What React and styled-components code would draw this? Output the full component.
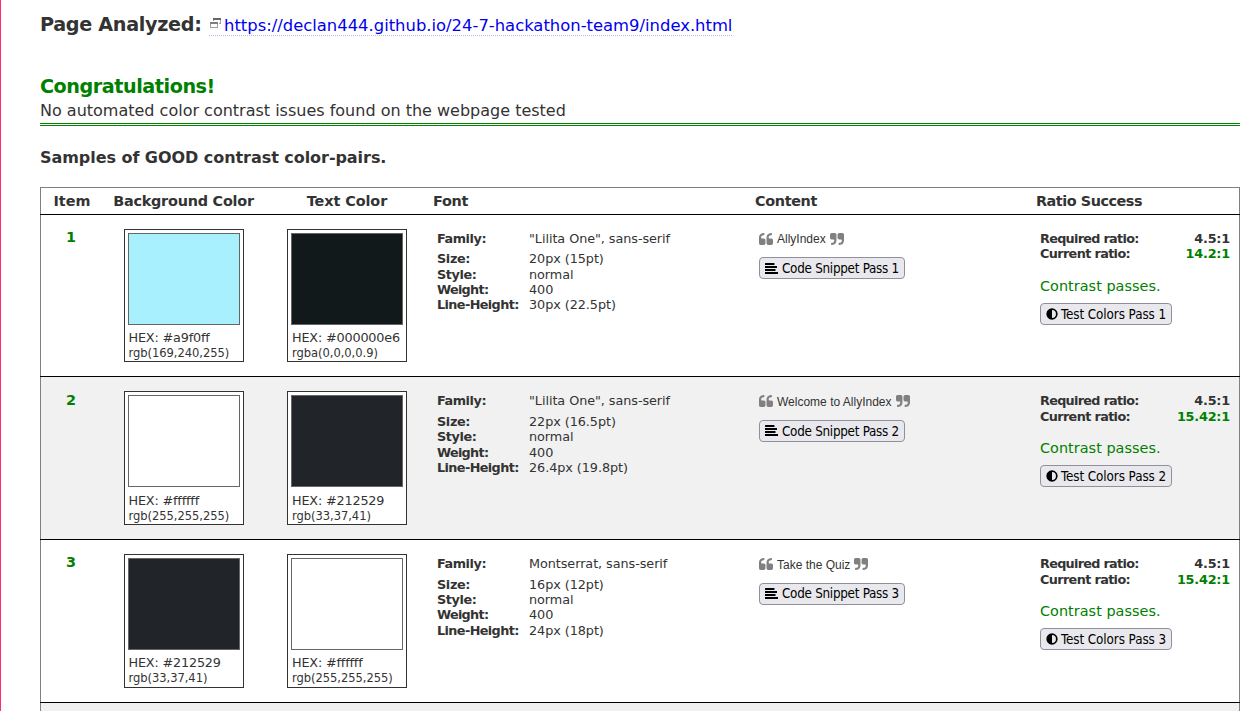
import React from 'react';
import styled, { createGlobalStyle } from 'styled-components';

const Global = createGlobalStyle`
  * { box-sizing: border-box; }
  html, body { margin: 0; background: #fff; overflow: hidden; }
  body { font-family: "DejaVu Sans", Verdana, sans-serif; color: #333; font-size: 16px; }
`;

const Page = styled.main`
  height: 711px;
  overflow: hidden;
  border-left: 1px solid #ff2b77;
  padding: 12px 15px 0 39px;
`;

const Track = styled.span`
  letter-spacing: ${(p) => p.$ls || 0}px;
`;

const Analyzed = styled.div`
  display: flex;
  align-items: flex-start;
  height: 24px;
  margin-bottom: 39px;
`;

const AnalyzedLabel = styled.h2`
  margin: 0;
  padding-top: 1px;
  width: 169px;
  font-size: 19.2px;
  line-height: 24px;
  letter-spacing: -0.32px;
`;

const PageLink = styled.a`
  display: flex;
  align-items: flex-start;
  gap: 3px;
  height: 20px;
  margin-top: 4px;
  color: #0000ee;
  font-size: 16.4px;
  line-height: 19px;
  text-decoration: none;
  border-bottom: 1px dotted #b9b9e6;
`;

const WindowIcon = styled.svg`
  display: block;
  width: 12px;
  height: 10px;
  margin-top: 2px;
`;

const Congrats = styled.h2`
  margin: 0;
  color: #008000;
  font-size: 19.2px;
  line-height: 24px;
  letter-spacing: -0.46px;
`;

const Summary = styled.p`
  margin: 0;
  height: 27px;
  padding-top: 2px;
  line-height: 20px;
  border-bottom: 3px double #008000;
`;

const SamplesTitle = styled.h3`
  margin: 22px 0 19px;
  font-size: 16px;
  line-height: 20px;
  letter-spacing: -0.05px;
`;

const Table = styled.section`
  border: 1px solid #808080;
  height: 620px;
`;

const Columns = styled.div`
  display: grid;
  grid-template-columns: 60px 165px 162px 322px 281px 1fr;
`;

const HeadRow = styled(Columns)`
  height: 25.7px;
  font-size: 14.4px;
  font-weight: bold;
  line-height: 26px;
`;

const HeadCell = styled.div`
  padding: 0 5px;
  text-align: ${(p) => (p.$center ? 'center' : 'left')};
  white-space: nowrap;
  letter-spacing: ${(p) => p.$ls || 0}px;
`;

const ItemHeadCell = styled(HeadCell)`
  padding: 0 4px 0 6px;
`;

const Divider = styled.div`
  height: 1px;
  margin: 0 -1px;
  background: #000;
`;

const Row = styled(Columns)`
  height: 161.67px;
  padding-top: 14px;
  background: ${(p) => (p.$shaded ? '#f1f1f1' : '#fff')};
`;

const ItemNumber = styled.div`
  padding-top: 0.35px;
  color: #008000;
  font-size: 14.4px;
  font-weight: bold;
  line-height: 17.3px;
  text-align: center;
`;

const SwatchBox = styled.div`
  justify-self: center;
  width: 120px;
  height: 133.7px;
  padding: 3px;
  border: 1px solid #333;
  background: #fff;
`;

const Swatch = styled.div`
  height: 92px;
  border: 1px solid #666;
  background: ${(p) => p.$color};
`;

const Hex = styled.div`
  padding: 5.2px 0 0 1px;
  font-size: 12.8px;
  line-height: 15.36px;
  white-space: nowrap;
  letter-spacing: -0.18px;
`;

const Rgb = styled.div`
  padding: 0.7px 0 0 1px;
  font-size: 11.52px;
  line-height: 15.4px;
  white-space: nowrap;
  letter-spacing: -0.04px;
`;

const FontList = styled.dl`
  display: grid;
  grid-template-columns: 92px 1fr;
  grid-template-rows: 20.36px;
  grid-auto-rows: 15.36px;
  margin: 0;
  padding: 2.15px 0 0 9px;
  font-size: 12.8px;
  line-height: 15.36px;
`;

const Term = styled.dt`
  font-weight: bold;
  letter-spacing: ${(p) => p.$ls}px;
`;

const Value = styled.dd`
  margin: 0;
  letter-spacing: -0.06px;
`;

const ContentCell = styled.div`
  padding: 2px 0 0 9px;
`;

const Quote = styled.div`
  display: flex;
  align-items: center;
  gap: 4px;
  height: 16px;
  margin-bottom: 10.6px;
  font: 12px/16px "Liberation Sans", Arial, sans-serif;
`;

const QuoteText = styled.span`
  padding-top: 1px;
`;

const QuoteMark = styled.svg`
  display: block;
  flex: none;
  width: 14px;
  height: 12px;
  fill: #808080;
`;

const Button = styled.button`
  display: flex;
  align-items: center;
  justify-content: flex-start;
  gap: ${(p) => p.$gap}px;
  width: ${(p) => p.$width}px;
  height: 22px;
  margin: 0;
  padding: 0 5px;
  border: 1px solid #8f8f9d;
  border-radius: 4px;
  background: #e9e9ed;
  color: #000;
  font: 13.33px/20px "DejaVu Sans Condensed", "DejaVu Sans", Tahoma, sans-serif;
  letter-spacing: ${(p) => p.$ls}px;
  white-space: nowrap;
  svg { flex: none; display: block; }
`;

const ButtonLabel = styled.span`
  padding-top: 1.6px;
`;

const TestButton = styled(Button)`
  padding-left: 4.5px;
`;

const RatioCell = styled.div`
  padding: 2.15px 9px 0 9px;
`;

const RatioLine = styled.div`
  display: flex;
  justify-content: space-between;
  font-size: 12.8px;
  font-weight: bold;
  line-height: 15.36px;
  color: #333;
`;

const RatioValue = styled.span`
  letter-spacing: -0.2px;
  color: ${(p) => (p.$good ? '#008000' : 'inherit')};
`;

const Passes = styled.p`
  margin: 15.1px 0 8.2px;
  color: #008000;
  font-size: 14.4px;
  line-height: 18px;
  letter-spacing: 0.04px;
`;

const AlignIcon = () => (
  <svg width="13" height="11" viewBox="0 0 13 11">
    <path d="M.5 0h8.5q.5 0 .5.5v1q0 .5-.5.5H.5Q0 2 0 1.500v-1Q0 0 .5 0zM0 3h12v2H0zM0 6h10.500v2H0zM0 9h13v2H0z" />
  </svg>
);

const ContrastIcon = () => (
  <svg width="12" height="12" viewBox="0 0 12 12">
    <circle cx="6" cy="6" r="4.8" fill="none" stroke="#000" strokeWidth="1.7" />
    <path d="M6 1a5 5 0 0 0 0 10z" />
  </svg>
);

const OPEN_MARK = 'M768 960v384q0 80-56 136t-136 56h-384q-80 0-136-56t-56-136v-704q0-104 40.5-198.5t109.5-163.5 163.5-109.5 198.5-40.5h64q26 0 45 19t19 45v128q0 26-19 45t-45 19h-64q-106 0-181 75t-75 181v32q0 40 28 68t68 28h224q80 0 136 56t56 136z';
const CLOSE_MARK = 'M768 320v704q0 104-40.5 198.5t-109.5 163.5-163.5 109.5-198.5 40.5h-64q-26 0-45-19t-19-45v-128q0-26 19-45t45-19h64q106 0 181-75t75-181v-32q0-40-28-68t-68-28h-224q-80 0-136-56t-56-136v-384q0-80 56-136t136-56h384q80 0 136 56t56 136z';

const Mark = ({ path }) => (
  <QuoteMark viewBox="0 128 1664 1408">
    <path d={path} />
    <path d={path} transform="translate(896 0)" />
  </QuoteMark>
);

const rows = [
  {
    bg: ['#a9f0ff', '#a9f0ff', 'rgb(169,240,255)'],
    fg: ['#11191a', '#000000e6', 'rgba(0,0,0,0.9)'],
    family: '"Lilita One", sans-serif', size: '20px (15pt)', lineHeight: '30px (22.5pt)',
    text: 'AllyIndex', ratio: '14.2:1',
  },
  {
    bg: ['#ffffff', '#ffffff', 'rgb(255,255,255)'],
    fg: ['#212529', '#212529', 'rgb(33,37,41)'],
    family: '"Lilita One", sans-serif', size: '22px (16.5pt)', lineHeight: '26.4px (19.8pt)',
    text: 'Welcome to AllyIndex', ratio: '15.42:1',
  },
  {
    bg: ['#212529', '#212529', 'rgb(33,37,41)'],
    fg: ['#ffffff', '#ffffff', 'rgb(255,255,255)'],
    family: 'Montserrat, sans-serif', size: '16px (12pt)', lineHeight: '24px (18pt)',
    text: 'Take the Quiz', ratio: '15.42:1',
  },
];

const ColorSample = ({ sample: [color, hex, rgb] }) => (
  <SwatchBox>
    <Swatch $color={color} />
    <Hex>HEX: {hex}</Hex>
    <Rgb>{rgb}</Rgb>
  </SwatchBox>
);

const SampleRow = ({ row, n }) => (
  <>
    <Row $shaded={n % 2 === 0}>
      <ItemNumber>{n}</ItemNumber>
      <ColorSample sample={row.bg} />
      <ColorSample sample={row.fg} />
      <FontList>
        <Term $ls={-0.45}>Family:</Term><Value>{row.family}</Value>
        <Term $ls={-0.35}>Size:</Term><Value>{row.size}</Value>
        <Term $ls={-0.4}>Style:</Term><Value>normal</Value>
        <Term $ls={-0.7}>Weight:</Term><Value>400</Value>
        <Term $ls={-0.6}>Line-Height:</Term><Value>{row.lineHeight}</Value>
      </FontList>
      <ContentCell>
        <Quote>
          <Mark path={OPEN_MARK} />
          <QuoteText>{row.text}</QuoteText>
          <Mark path={CLOSE_MARK} />
        </Quote>
        <Button $width={146} $gap={4} $ls={-0.27}>
          <AlignIcon /><ButtonLabel>Code Snippet Pass {n}</ButtonLabel>
        </Button>
      </ContentCell>
      <RatioCell>
        <RatioLine><Track $ls={-0.7}>Required ratio:</Track><RatioValue>4.5:1</RatioValue></RatioLine>
        <RatioLine><Track $ls={-0.63}>Current ratio:</Track><RatioValue $good>{row.ratio}</RatioValue></RatioLine>
        <Passes>Contrast passes.</Passes>
        <TestButton $width={132} $gap={3.5} $ls={-0.08}>
          <ContrastIcon /><ButtonLabel>Test Colors Pass {n}</ButtonLabel>
        </TestButton>
      </RatioCell>
    </Row>
    <Divider />
  </>
);

export default function App() {
  return (
    <Page>
      <Global />
      <Analyzed>
        <AnalyzedLabel>Page Analyzed:</AnalyzedLabel>
        <PageLink href="#">
          <WindowIcon viewBox="0 0 12 10" shapeRendering="crispEdges">
            <path d="M4 2h1v1H4zM11 2h1v4h-1zM10 5h1v1h-1z" fill="#a0a0a0" />
            <path d="M4 0h8v2H4z" fill="#666" />
            <path d="M1 5h1v5H1zM8 5h1v5H8zM2 9h6v1H2z" fill="#a0a0a0" />
            <path d="M1 4h8v2H1z" fill="#808080" />
          </WindowIcon>
          https://declan444.github.io/24-7-hackathon-team9/index.html
        </PageLink>
      </Analyzed>
      <Congrats>Congratulations!</Congrats>
      <Summary>No automated color contrast issues found on the webpage tested</Summary>
      <SamplesTitle>Samples of GOOD contrast color-pairs.</SamplesTitle>
      <Table>
        <HeadRow>
          <ItemHeadCell $center>Item</ItemHeadCell>
          <HeadCell $center $ls={-0.22}>Background Color</HeadCell>
          <HeadCell $center $ls={-0.08}>Text Color</HeadCell>
          <HeadCell $ls={-0.3}>Font</HeadCell>
          <HeadCell $ls={-0.35}>Content</HeadCell>
          <HeadCell $ls={-0.46}>Ratio Success</HeadCell>
        </HeadRow>
        <Divider />
        {rows.map((row, i) => <SampleRow key={i} row={row} n={i + 1} />)}
        <Row $shaded />
      </Table>
    </Page>
  );
}
